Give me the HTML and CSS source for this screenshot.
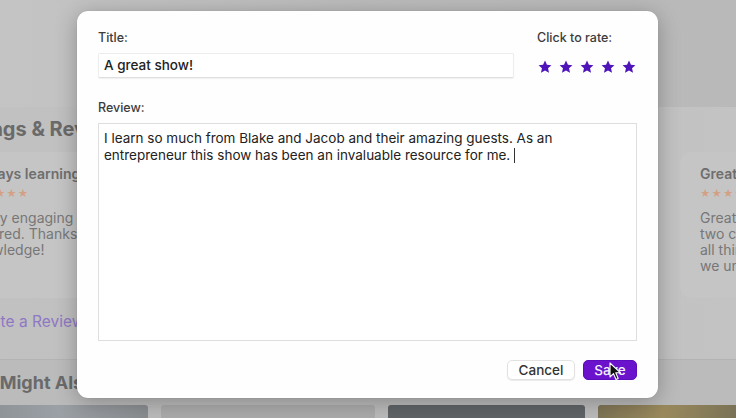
FILE: index.html
```html
<!DOCTYPE html>
<html>
<head>
<meta charset="utf-8">
<link rel="stylesheet" href="styles.css">
</head>
<body>
<div class="page">
  <header class="top"></header>
  <section class="reviews">
    <h2 class="heading h-reviews">Ratings &amp; Reviews</h2>
    <div class="cards">
      <div class="card">
        <div class="card-title">Always learning</div>
        <div class="card-stars">★★★★★</div>
        <p class="card-body card-body-shift">Really engaging conversations every week.<br>inspired. Thanks for sharing all of that<br>knowledge!</p>
      </div>
      <div class="card">
        <div class="card-title">Must listen</div>
        <div class="card-stars">★★★★★</div>
        <p class="card-body">Hidden card</p>
      </div>
      <div class="card">
        <div class="card-title">Great insights</div>
        <div class="card-stars">★★★★★</div>
        <p class="card-body">Great show from these<br>two cofounders covering<br>all things startups and<br>we uncover so much.</p>
      </div>
    </div>
    <div class="write">Write a Review</div>
  </section>
  <section class="also">
    <h2 class="heading h-also">You Might Also Like</h2>
    <div class="thumbs">
      <div class="thumb t1"></div>
      <div class="thumb t2"></div>
      <div class="thumb t3"></div>
      <div class="thumb t4"></div>
    </div>
  </section>
</div>

<div class="modal">
  <div class="row-top">
    <div class="col-title">
      <label class="label">Title:</label>
      <div class="input">A great show!</div>
    </div>
    <div class="col-rate">
      <label class="label">Click to rate:</label>
      <div class="stars">
        <svg class="star" viewBox="0 0 24 24"><path d="M12 1l3.3 7.1 7.7.8-5.8 5.2 1.7 7.7L12 17.9l-6.9 3.9 1.7-7.7L1 8.9l7.7-.8z"/></svg>
        <svg class="star" viewBox="0 0 24 24"><path d="M12 1l3.3 7.1 7.7.8-5.8 5.2 1.7 7.7L12 17.9l-6.9 3.9 1.7-7.7L1 8.9l7.7-.8z"/></svg>
        <svg class="star" viewBox="0 0 24 24"><path d="M12 1l3.3 7.1 7.7.8-5.8 5.2 1.7 7.7L12 17.9l-6.9 3.9 1.7-7.7L1 8.9l7.7-.8z"/></svg>
        <svg class="star" viewBox="0 0 24 24"><path d="M12 1l3.3 7.1 7.7.8-5.8 5.2 1.7 7.7L12 17.9l-6.9 3.9 1.7-7.7L1 8.9l7.7-.8z"/></svg>
        <svg class="star" viewBox="0 0 24 24"><path d="M12 1l3.3 7.1 7.7.8-5.8 5.2 1.7 7.7L12 17.9l-6.9 3.9 1.7-7.7L1 8.9l7.7-.8z"/></svg>
      </div>
    </div>
  </div>
  <label class="label label-review">Review:</label>
  <div class="textarea">I learn so much from Blake and Jacob and their amazing guests. As an entrepreneur this show has been an invaluable resource for me. <span class="caret"></span></div>
  <div class="actions">
    <button class="btn btn-cancel">Cancel</button>
    <button class="btn btn-save">Save</button>
  </div>
</div>

<svg class="pointer" viewBox="0 0 12 19" width="12" height="19">
  <path d="M1 1 L1 15 L4.5 11.6 L7 17.5 L9.2 16.5 L6.8 10.8 L11.5 10.8 Z" fill="#111" stroke="#fff" stroke-width="1.1" stroke-linejoin="round"/>
</svg>
</body>
</html>
```
FILE: styles.css
```css
* { box-sizing: border-box; }
html, body { margin: 0; padding: 0; }
body {
  width: 736px;
  height: 418px;
  overflow: hidden;
  font-family: Inter, "Noto Sans", "Liberation Sans", sans-serif;
  background: #bdbdbd;
  position: relative;
}
.page {
  width: 736px;
  height: 418px;
  overflow: hidden;
  display: flex;
  flex-direction: column;
}
.top {
  height: 107px;
  flex: none;
  background: linear-gradient(90deg, #c4c4c4 0%, #bcbcbc 50%, #b9b9b9 100%);
}
.reviews {
  flex: none;
  height: 253px;
  background: linear-gradient(90deg, #c1c1c1 0%, #bebebe 50%, #c3c3c3 100%);
  border-bottom: 1px solid #b3b3b3;
  padding-top: 10px;
}
.heading {
  margin: 0;
  font-size: 20px;
  line-height: 24px;
  font-weight: 700;
  color: #6a6a6a;
  white-space: nowrap;
}
.h-reviews { margin-left: -47px; }
.cards {
  display: flex;
  gap: 24px;
  margin-left: -48px;
  margin-top: 11px;
}
.card {
  flex: none;
  width: 340px;
  height: 146px;
  border-radius: 12px;
  background: #c5c5c5;
  padding: 13px 20px 0;
  white-space: nowrap;
}
.card-title {
  font-size: 14px;
  line-height: 18px;
  font-weight: 600;
  color: #6e6e6e;
}
.card-stars {
  margin-top: 4px;
  font-size: 10px;
  line-height: 12px;
  letter-spacing: 1px;
  color: #d3a084;
}
.card-body {
  margin: 11px 0 0;
  font-size: 14px;
  line-height: 16px;
  color: #777;
}
.card-body-shift { margin-left: -4px; }
.write {
  margin: 14px 0 0 -24px;
  font-size: 15.5px;
  line-height: 20px;
  color: #8e78c4;
  white-space: nowrap;
}
.also {
  flex: 1;
  background: #bbbbbb;
  padding-top: 11px;
}
.h-also { margin-left: -38px; font-size: 18px; }
.thumbs {
  display: flex;
  gap: 13px;
  margin-top: 10px;
}
.thumb { flex: none; height: 30px; border-radius: 3px 3px 0 0; }
.t1 { width: 148px; background: linear-gradient(90deg, #8f9499, #9ba0a6 40%, #8a8d90); border-radius: 0 3px 0 0; }
.t2 { width: 214px; background: #ababab; }
.t3 { width: 197px; background: #606467; }
.t4 { width: 160px; background: linear-gradient(100deg, #7d7355, #9a8a5c 40%, #6f6a55); }

/* Modal */
.modal {
  position: absolute;
  left: 77px;
  top: 11px;
  width: 581px;
  height: 387px;
  background: #fefefe;
  border-radius: 11px;
  box-shadow: 0 4px 22px rgba(0,0,0,0.28), 0 0 1px rgba(0,0,0,0.2);
  padding: 19px 21px 18px;
  display: flex;
  flex-direction: column;
}
.row-top {
  display: flex;
  gap: 23px;
}
.col-title { width: 416px; display: flex; flex-direction: column; }
.col-rate { flex: 1; display: flex; flex-direction: column; }
.label {
  font-size: 12.5px;
  line-height: 15px;
  font-weight: 500;
  color: #3c3c3c;
}
.input {
  margin-top: 8px;
  height: 25px;
  border: 1px solid #ededed;
  border-bottom-color: #e0e0e0;
  border-radius: 2px;
  background: #fff;
  box-shadow: 0 1px 1px rgba(0,0,0,0.06);
  font-size: 13.5px;
  line-height: 23px;
  padding-left: 5px;
  color: #222;
  font-weight: 500;
}
.stars {
  margin-top: 15px;
  display: flex;
  gap: 7px;
  padding-left: 1px;
}
.star { width: 14px; height: 14px; fill: #4e14b9; }
.label-review { margin-top: 22px; }
.textarea {
  margin-top: 8px;
  height: 218px;
  border: 1px solid #dedede;
  background: #fff;
  padding: 6px 60px 0 5px;
  font-size: 13.5px;
  line-height: 17px;
  color: #222;
}
.caret {
  display: inline-block;
  width: 1px;
  height: 15px;
  background: #333;
  vertical-align: -3px;
}
.actions {
  margin-top: 19px;
  display: flex;
  justify-content: flex-end;
  gap: 8px;
}
.btn {
  height: 20px;
  border-radius: 5px;
  font-family: inherit;
  font-size: 13.5px;
  font-weight: 500;
  line-height: 18px;
  padding: 0;
  cursor: default;
}
.btn-cancel {
  width: 68px;
  background: #fff;
  border: 1px solid #e2e2e2;
  box-shadow: 0 1px 1px rgba(0,0,0,0.08);
  color: #333;
}
.btn-save {
  width: 54px;
  background: #6a12cc;
  border: 1px solid #5d0dbb;
  color: #f4efff;
}
.pointer {
  position: absolute;
  left: 609px;
  top: 362px;
}
```
